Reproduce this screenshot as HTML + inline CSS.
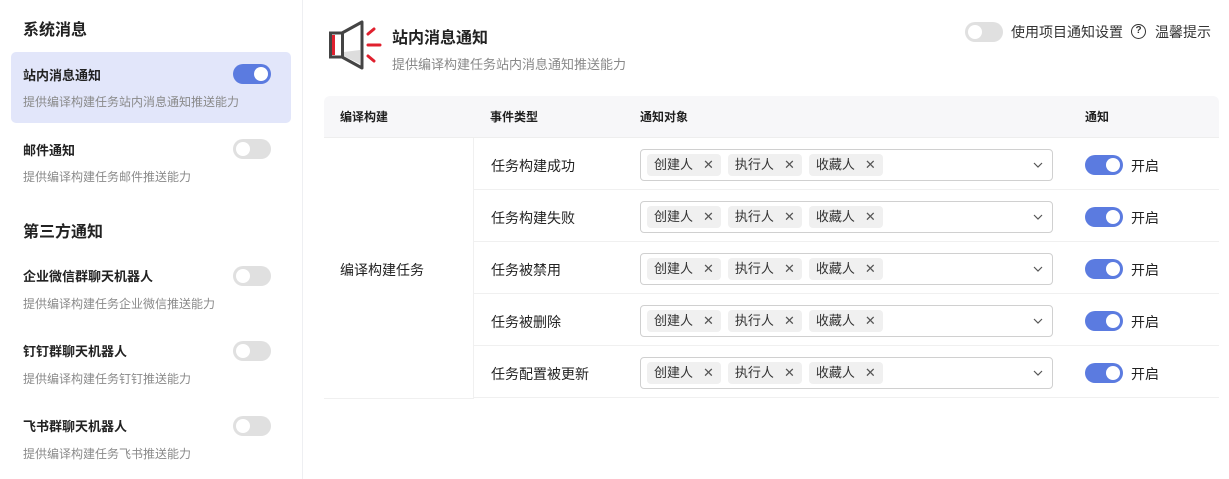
<!DOCTYPE html>
<html><head><meta charset="utf-8"><style>
*{box-sizing:border-box;margin:0;padding:0}
body{width:1229px;height:479px;background:#fff;font-family:"Liberation Sans","Noto Sans CJK SC",sans-serif;color:#1f1f1f;position:relative;overflow:hidden}
.abs{position:absolute}
.side{position:absolute;left:0;top:0;width:303px;height:479px;border-right:1px solid #eeeff2}
.h{position:absolute;left:23px;font-size:16px;font-weight:bold;color:#222}
.t{position:absolute;left:23px;font-size:13px;font-weight:bold;color:#222}
.d{position:absolute;left:23px;font-size:12px;color:#8a8a8a}
.sw{position:absolute;width:38px;height:20px;border-radius:10px;background:#e0e0e0}
.sw::after{content:"";position:absolute;left:3px;top:3px;width:14px;height:14px;border-radius:50%;background:#fff}
.sw.on{background:#5b7be0}
.sw.on::after{left:21px}
.tag{display:inline-block;height:22px;line-height:22px;background:#f0f0f0;border-radius:4px;padding:0 7px;font-size:13px;color:#333;margin-right:7px}
.tag span{margin-left:10px;font-size:13px;color:#555}
.sel{position:absolute;left:640px;width:413px;height:32px;border:1px solid #d0d0d0;border-radius:4px;padding:4px 0 0 6px}
.row{position:absolute;left:473px;width:746px;height:52px;border-bottom:1px solid #f0f0f0}
.ev{position:absolute;left:491px;font-size:14px;color:#222}
.on-t{position:absolute;left:1131px;font-size:14px;color:#222}
</style></head><body>
<div class="side">
  <div class="h" style="top:16px">系统消息</div>
  <div class="abs" style="left:11px;top:52px;width:280px;height:71px;background:#e2e6fa;border-radius:5px"></div>
  <div class="t" style="top:65px">站内消息通知</div><div class="sw on" style="left:233px;top:64px"></div>
  <div class="d" style="top:93px">提供编译构建任务站内消息通知推送能力</div>
  <div class="t" style="top:140px">邮件通知</div><div class="sw" style="left:233px;top:139px"></div>
  <div class="d" style="top:168px">提供编译构建任务邮件推送能力</div>
  <div class="h" style="top:218px">第三方通知</div>
  <div class="t" style="top:266px">企业微信群聊天机器人</div><div class="sw" style="left:233px;top:266px"></div>
  <div class="d" style="top:295px">提供编译构建任务企业微信推送能力</div>
  <div class="t" style="top:341px">钉钉群聊天机器人</div><div class="sw" style="left:233px;top:341px"></div>
  <div class="d" style="top:370px">提供编译构建任务钉钉推送能力</div>
  <div class="t" style="top:416px">飞书群聊天机器人</div><div class="sw" style="left:233px;top:416px"></div>
  <div class="d" style="top:445px">提供编译构建任务飞书推送能力</div>
</div>
<svg class="abs" style="left:326px;top:18px" width="60" height="56" viewBox="326 18 60 56">
  <path d="M342 33 L362 22 L362 68 L342 57 Z" fill="#fff" stroke="#444" stroke-width="3" stroke-linejoin="round"/>
  <path d="M344 52 L360 50 L360 64 L344 56 Z" fill="#ddd"/>
  <rect x="330.5" y="33" width="12" height="24" fill="#fff" stroke="#444" stroke-width="3"/>
  <rect x="332" y="35" width="3" height="20" fill="#e0202e"/>
  <path d="M368 34 L374 29 M368 45 L380 45 M368 56 L374 61" stroke="#e0202e" stroke-width="3" stroke-linecap="round"/>
</svg>
<div class="abs" style="left:392px;top:24px;font-size:16px;font-weight:bold;color:#222">站内消息通知</div>
<div class="abs" style="left:392px;top:54px;font-size:13px;color:#888">提供编译构建任务站内消息通知推送能力</div>
<div class="sw" style="left:965px;top:22px"></div>
<div class="abs" style="left:1011px;top:22px;font-size:14px;color:#333">使用项目通知设置</div>
<div class="abs" style="left:1131px;top:24px;width:15px;height:15px;border:1.3px solid #333;border-radius:50%;font-size:10px;line-height:12px;text-align:center;font-weight:bold;color:#333">?</div>
<div class="abs" style="left:1155px;top:22px;font-size:14px;color:#333">温馨提示</div>
<div class="abs" style="left:324px;top:96px;width:895px;height:42px;background:#f7f7f9;border-radius:6px 6px 0 0;border-bottom:1px solid #eee"></div>
<div class="abs" style="left:340px;top:108px;font-size:12px;font-weight:bold">编译构建</div>
<div class="abs" style="left:490px;top:108px;font-size:12px;font-weight:bold">事件类型</div>
<div class="abs" style="left:640px;top:108px;font-size:12px;font-weight:bold">通知对象</div>
<div class="abs" style="left:1085px;top:108px;font-size:12px;font-weight:bold">通知</div>
<div class="abs" style="left:324px;top:138px;width:150px;height:261px;border-right:1px solid #f0f0f0;border-bottom:1px solid #f0f0f0"></div>
<div class="abs" style="left:340px;top:260px;font-size:14px">编译构建任务</div>
<div class="row" style="top:138px"></div><div class="ev" style="top:156px">任务构建成功</div>
<div class="row" style="top:190px"></div><div class="ev" style="top:208px">任务构建失败</div>
<div class="row" style="top:242px"></div><div class="ev" style="top:260px">任务被禁用</div>
<div class="row" style="top:294px"></div><div class="ev" style="top:312px">任务被删除</div>
<div class="row" style="top:346px"></div><div class="ev" style="top:364px">任务配置被更新</div>
<div class="sel" style="top:149px"><span class="tag">创建人<span>✕</span></span><span class="tag">执行人<span>✕</span></span><span class="tag">收藏人<span>✕</span></span></div>
<div class="sel" style="top:201px"><span class="tag">创建人<span>✕</span></span><span class="tag">执行人<span>✕</span></span><span class="tag">收藏人<span>✕</span></span></div>
<div class="sel" style="top:253px"><span class="tag">创建人<span>✕</span></span><span class="tag">执行人<span>✕</span></span><span class="tag">收藏人<span>✕</span></span></div>
<div class="sel" style="top:305px"><span class="tag">创建人<span>✕</span></span><span class="tag">执行人<span>✕</span></span><span class="tag">收藏人<span>✕</span></span></div>
<div class="sel" style="top:357px"><span class="tag">创建人<span>✕</span></span><span class="tag">执行人<span>✕</span></span><span class="tag">收藏人<span>✕</span></span></div>
<svg class="abs" style="left:1032px;top:161px" width="12" height="220"><g fill="none" stroke="#555" stroke-width="1.2"><path d="M2 2 L6 6 L10 2"/><path d="M2 54 L6 58 L10 54"/><path d="M2 106 L6 110 L10 106"/><path d="M2 158 L6 162 L10 158"/><path d="M2 210 L6 214 L10 210"/></g></svg>
<div class="sw on" style="left:1085px;top:155px"></div><div class="on-t" style="top:156px">开启</div>
<div class="sw on" style="left:1085px;top:207px"></div><div class="on-t" style="top:208px">开启</div>
<div class="sw on" style="left:1085px;top:259px"></div><div class="on-t" style="top:260px">开启</div>
<div class="sw on" style="left:1085px;top:311px"></div><div class="on-t" style="top:312px">开启</div>
<div class="sw on" style="left:1085px;top:363px"></div><div class="on-t" style="top:364px">开启</div>
</body></html>
